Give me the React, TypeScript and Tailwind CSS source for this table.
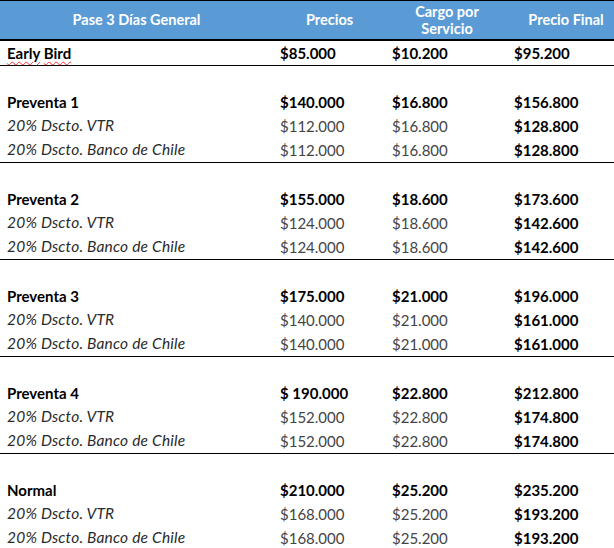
import React from "react";

type Row = { label: string; p: string; c: string; f: string; kind: "main" | "sub" };

const groups: Row[][] = [
  [
    { label: "Preventa 1", p: "$140.000", c: "$16.800", f: "$156.800", kind: "main" },
    { label: "20% Dscto. VTR", p: "$112.000", c: "$16.800", f: "$128.800", kind: "sub" },
    { label: "20% Dscto. Banco de Chile", p: "$112.000", c: "$16.800", f: "$128.800", kind: "sub" },
  ],
  [
    { label: "Preventa 2", p: "$155.000", c: "$18.600", f: "$173.600", kind: "main" },
    { label: "20% Dscto. VTR", p: "$124.000", c: "$18.600", f: "$142.600", kind: "sub" },
    { label: "20% Dscto. Banco de Chile", p: "$124.000", c: "$18.600", f: "$142.600", kind: "sub" },
  ],
  [
    { label: "Preventa 3", p: "$175.000", c: "$21.000", f: "$196.000", kind: "main" },
    { label: "20% Dscto. VTR", p: "$140.000", c: "$21.000", f: "$161.000", kind: "sub" },
    { label: "20% Dscto. Banco de Chile", p: "$140.000", c: "$21.000", f: "$161.000", kind: "sub" },
  ],
  [
    { label: "Preventa 4", p: "$ 190.000", c: "$22.800", f: "$212.800", kind: "main" },
    { label: "20% Dscto. VTR", p: "$152.000", c: "$22.800", f: "$174.800", kind: "sub" },
    { label: "20% Dscto. Banco de Chile", p: "$152.000", c: "$22.800", f: "$174.800", kind: "sub" },
  ],
  [
    { label: "Normal", p: "$210.000", c: "$25.200", f: "$235.200", kind: "main" },
    { label: "20% Dscto. VTR", p: "$168.000", c: "$25.200", f: "$193.200", kind: "sub" },
    { label: "20% Dscto. Banco de Chile", p: "$168.000", c: "$25.200", f: "$193.200", kind: "sub" },
  ],
];

const grid = "grid grid-cols-[273px_113px_122px_106px]";

function DataRow({ r }: { r: Row }) {
  const main = r.kind === "main";
  return (
    <div className={`${grid} h-[24px] items-center`}>
      <div className={`pl-[7px] ${main ? "font-bold text-black" : "italic font-normal text-[#2a2a2a] text-[15.5px] tracking-[0.2px]"}`}>{r.label}</div>
      <div className={`pl-[7px] ${main ? "font-bold text-black" : "font-normal text-[#444]"}`}>{r.p}</div>
      <div className={`pl-[6px] ${main ? "font-bold text-black" : "font-normal text-[#444]"}`}>{r.c}</div>
      <div className="pl-[6px] font-bold text-black">{r.f}</div>
    </div>
  );
}

export default function App() {
  return (
    <div className="w-[614px] h-[548px] bg-white overflow-hidden text-[15px] leading-none" style={{ fontFamily: "Lato, 'Open Sans', sans-serif" }}>
      <div className={`${grid} h-[41px] bg-[#5b9bd5] border-t border-b-2 border-black text-white font-bold text-[14.5px] items-center`}>
        <div className="text-center">Pase 3 Días General</div>
        <div className="text-center">Precios</div>
        <div className="text-center leading-[17px]">Cargo por<br />Servicio</div>
        <div className="text-center pl-[10px] whitespace-nowrap">Precio Final</div>
      </div>
      <div className={`${grid} h-[25px] items-center border-b border-black`}>
        <div className="pl-[7px] font-bold">
          <span className="underline decoration-wavy decoration-red-500 decoration-1 underline-offset-2">Early</span>{" "}
          <span className="underline decoration-wavy decoration-red-500 decoration-1 underline-offset-2">Bird</span>
        </div>
        <div className="pl-[7px] font-bold">$85.000</div>
        <div className="pl-[6px] font-bold">$10.200</div>
        <div className="pl-[6px] font-bold">$95.200</div>
      </div>
      {groups.map((g, i) => (
        <div key={i} className={i < groups.length - 1 ? "border-b border-black" : ""}>
          <div className="h-[24px]" />
          {g.map((r, j) => (
            <DataRow key={j} r={r} />
          ))}
        </div>
      ))}
    </div>
  );
}
